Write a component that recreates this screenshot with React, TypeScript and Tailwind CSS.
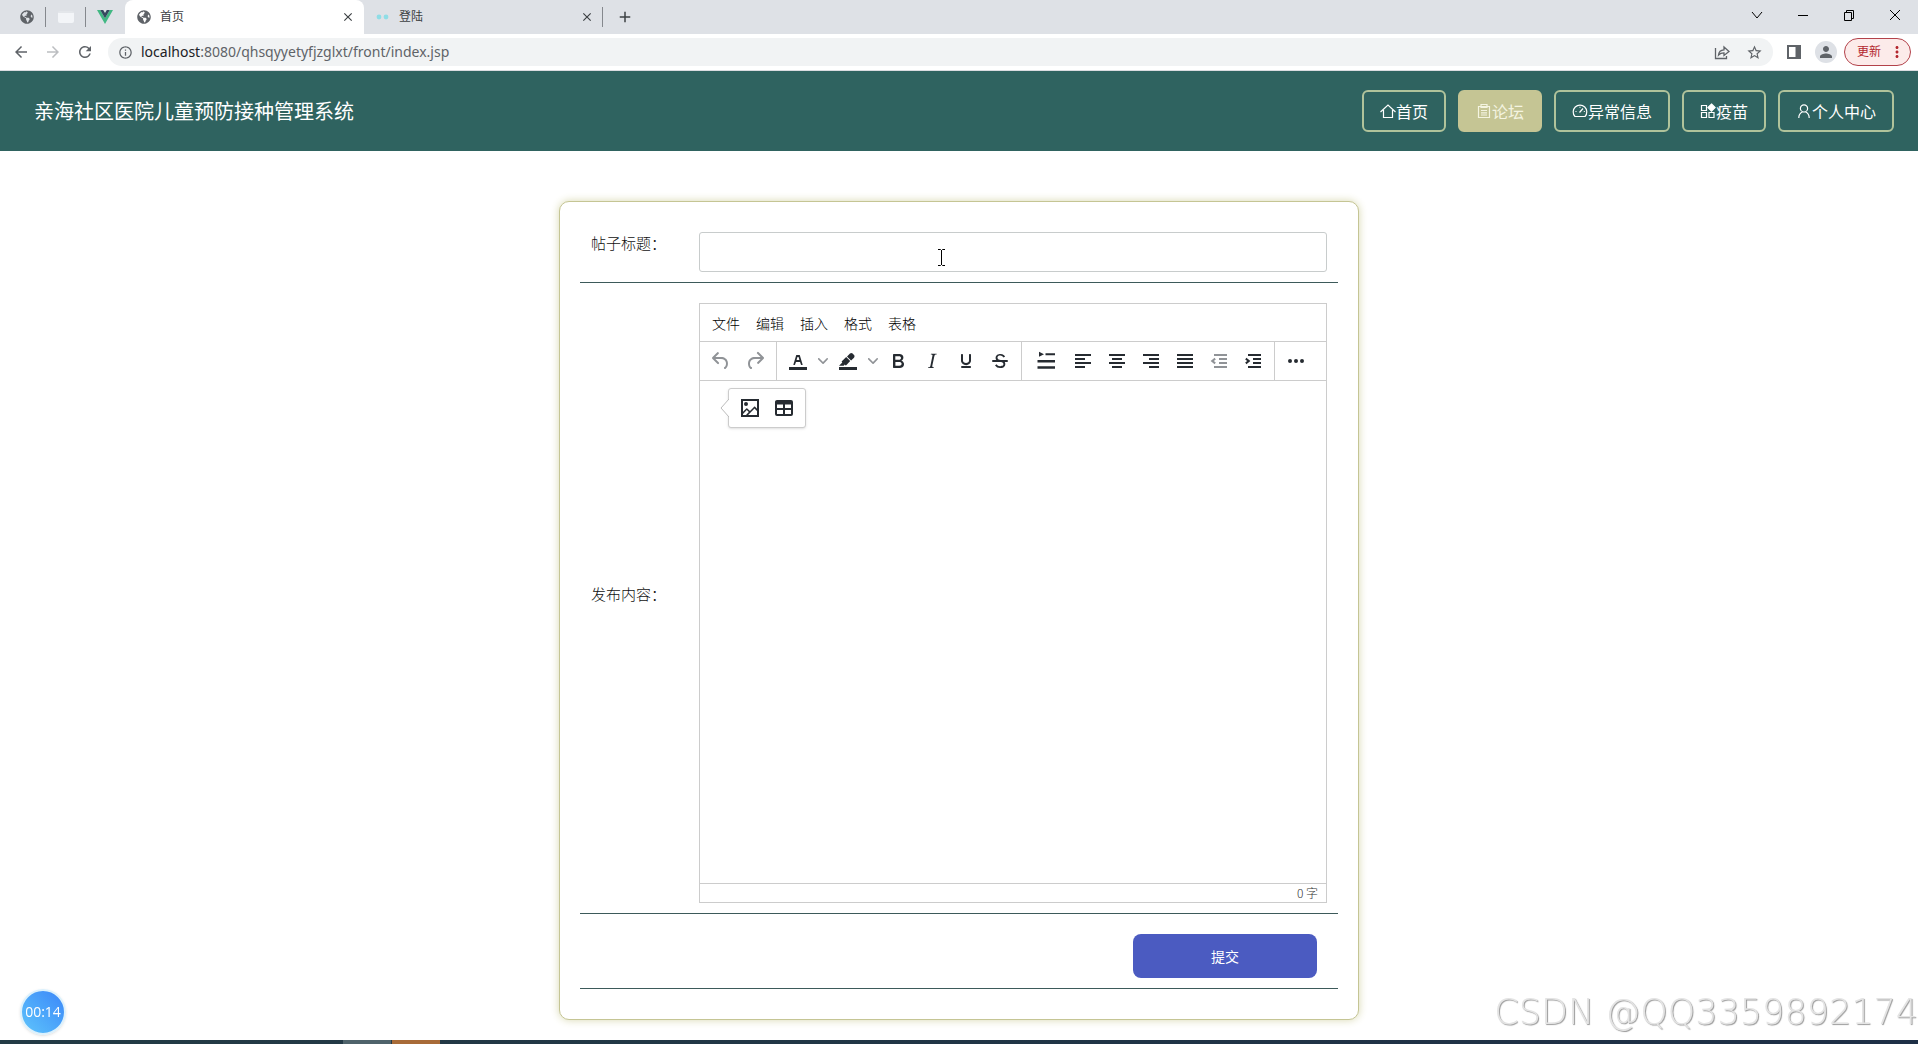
import React from "react";
import clsx from "clsx";
import { FaGlobeAmericas } from "react-icons/fa";
import {
  MdArrowBack,
  MdArrowForward,
  MdRefresh,
  MdInfoOutline,
  MdStarBorder,
  MdPerson,
  MdMoreVert,
  MdAdd,
  MdClose,
} from "react-icons/md";

const navItems = [
  { label: "首页", icon: "home" },
  { label: "论坛", icon: "form", active: true },
  { label: "异常信息", icon: "gauge" },
  { label: "疫苗", icon: "component" },
  { label: "个人中心", icon: "user" },
];

const menus = ["文件", "编辑", "插入", "格式", "表格"];

const navIcons: Record<string, React.ReactNode> = {
  home: <path d="M.5 9 8 2l7.5 7M3.5 7v7.5h9V7" />,
  form: <path d="M2.5 3.5h11v11h-11zM5 1.5h6v3H5zM5 7.5h6M5 9.8h6M5 12h6" />,
  gauge: (
    <path d="M3 13.5a6.8 6.8 0 1 1 10 0zM7.5 9.5l3.5-4M3.5 8.5h1M8 3.8v1M11.8 8.5h1" />
  ),
  component: (
    <>
      <path d="M1.5 2.5h5v5h-5zM1.5 9.5h5v5h-5zM9 9.5h5v5H9z" />
      <path d="m11.5 1 3.6 3.6-3.6 3.6-3.6-3.6z" fill="currentColor" />
    </>
  ),
  user: (
    <path d="M8 9a3.6 3.6 0 1 0 0-7.2A3.6 3.6 0 0 0 8 9zM2.8 15c0-3.4 1.6-5.2 3.7-6.2M13.2 15c0-3.4-1.6-5.2-3.7-6.2" />
  ),
};

const paths = {
  undo: "M6.4 8H12c3.7 0 6.2 2 6.8 5.1.6 2.7-.4 5.6-2.3 6.8a1 1 0 0 1-1-1.8c1.1-.6 1.8-2.7 1.4-4.6-.5-2.1-2.1-3.5-4.9-3.5H6.4l3.3 3.3a1 1 0 1 1-1.4 1.4l-5-5a1 1 0 0 1 0-1.4l5-5a1 1 0 0 1 1.4 1.4L6.4 8z",
  redo: "M17.6 10H12c-2.8 0-4.4 1.4-4.9 3.5-.4 2 .3 4 1.4 4.6a1 1 0 1 1-1 1.8c-2-1.2-2.9-4.1-2.3-6.8.6-3 3-5.1 6.8-5.1h5.6l-3.3-3.3a1 1 0 1 1 1.4-1.4l5 5a1 1 0 0 1 0 1.4l-5 5a1 1 0 0 1-1.4-1.4l3.3-3.3z",
  color:
    "M3 18h18v3H3zM8.7 16h-.8a.5.5 0 0 1-.5-.6l2.7-9c.1-.3.3-.4.5-.4h2.8c.2 0 .4.1.5.4l2.7 9a.5.5 0 0 1-.5.6h-.8a.5.5 0 0 1-.4-.4l-.7-2.2c0-.3-.3-.4-.5-.4h-3.4c-.2 0-.4.1-.5.4l-.7 2.2c0 .3-.2.4-.4.4zm2.6-7.6-.6 2a.5.5 0 0 0 .5.6h1.6a.5.5 0 0 0 .5-.6l-.6-2c0-.3-.3-.4-.5-.4h-.4c-.2 0-.4.1-.5.4z",
  highlight:
    "M3 18h18v3H3zM7.7 16.7H3l3.3-3.3-.7-.8L10.2 8l4 4.1-4 4.2c-.2.2-.6.2-.8 0l-.6-.7-1.1 1.1zm5-7.5L11 7.4l3-2.9a2 2 0 0 1 2.6 0L18 6c.7.7.7 2 0 2.7l-2.9 2.9-1.8-1.8-.5-.6",
  bold: "M7.8 19c-.3 0-.5 0-.6-.2l-.2-.5V5.7c0-.2 0-.4.2-.5l.6-.2h5c1.5 0 2.7.3 3.5 1 .7.6 1.1 1.4 1.1 2.5a3 3 0 0 1-.6 1.9c-.4.6-1 1-1.6 1.2.4.1.9.3 1.3.6s.8.7 1 1.2c.4.4.5 1 .5 1.6 0 1.3-.4 2.3-1.3 3-.8.7-2.1 1-3.8 1H7.8zm5-8.3c.6 0 1.2-.1 1.6-.5.4-.3.6-.7.6-1.3 0-1.1-.8-1.7-2.3-1.7H9.3v3.5h3.4zm.5 6c.7 0 1.3-.1 1.7-.4.4-.4.6-.9.6-1.5s-.2-1-.7-1.4c-.4-.3-1-.4-2-.4H9.4v3.8h4z",
  italic:
    "M16.7 4.7l-.1.9h-.3c-.6 0-1 0-1.4.3-.3.3-.4.6-.5 1.1l-2.1 9.8v.6c0 .5.4.8 1.4.8h.2l-.2.8H8l.2-.8h.2c1.1 0 1.8-.5 2-1.5l2-9.8.1-.5c0-.6-.4-.8-1.4-.8h-.3l.2-.9h5.8z",
  underline:
    "M16 5c.6 0 1 .4 1 1v5.5a4 4 0 0 1-.4 1.8l-1 1.4a5.3 5.3 0 0 1-5.5 1 5 5 0 0 1-1.6-1c-.5-.4-.8-.9-1.1-1.4a4 4 0 0 1-.4-1.8V6c0-.6.4-1 1-1s1 .4 1 1v5.5c0 .3 0 .6.2 1l.6.7a3.3 3.3 0 0 0 2.2.8 3.4 3.4 0 0 0 2.2-.8c.3-.2.4-.5.6-.8l.2-.9V6c0-.6.4-1 1-1zM8 17h8c.6 0 1 .4 1 1s-.4 1-1 1H8a1 1 0 0 1 0-2z",
  strike:
    "M15.6 8.5c-.5-.7-1-1.1-1.3-1.3-.6-.4-1.3-.6-2-.6-2.7 0-2.8 1.7-2.8 2.1 0 1.6 1.8 2 3.2 2.3 4.4.9 4.6 2.8 4.6 3.9 0 1.4-.7 4.1-5 4.1A6.2 6.2 0 0 1 7 16.4l1.5-1.1c.4.6 1.6 2 3.7 2 1.6 0 2.5-.4 3-1.2.4-.8.3-2-.8-2.6-.7-.4-1.6-.7-2.9-1-1-.2-3.9-.8-3.9-3.6C7.6 6 10.3 5 12.4 5c2.9 0 4.2 1.6 4.7 2.4l-1.5 1.1zM5 11h14a1 1 0 0 1 0 2H5a1 1 0 0 1 0-2z",
  indentFirst:
    "M5 2.8 10 5.3 5 7.8zM11.5 4.3H21v2h-9.5zM3.5 11H21v2.500H3.500zM3.500 17.300H21v2.500H3.500z",
  left: "M4 5h16v2H4zM4 9h10v2H4zM4 13h16v2H4zM4 17h10v2H4z",
  center: "M4 5h16v2H4zM7 9h10v2H7zM4 13h16v2H4zM7 17h10v2H7z",
  right: "M4 5h16v2H4zM10 9h10v2H10zM4 13h16v2H4zM10 17h10v2H10z",
  justify: "M4 5h16v2H4zM4 9h16v2H4zM4 13h16v2H4zM4 17h16v2H4z",
  outdent:
    "M7 5h13v2H7zM12 9h8v2h-8zM12 13h8v2h-8zM7 17h13v2H7zM7.6 15.2 3.6 12l4-3.2 1.2 1.6L6.8 12l2 1.6z",
  indent:
    "M7 5h13v2H7zM12 9h8v2h-8zM12 13h8v2h-8zM7 17h13v2H7zM5.4 15.2 9.4 12l-4-3.2-1.2 1.6L6.2 12l-2 1.6z",
  more: "M6 10a2 2 0 1 0 0 4 2 2 0 0 0 0-4zM12 10a2 2 0 1 0 0 4 2 2 0 0 0 0-4zM18 10a2 2 0 1 0 0 4 2 2 0 0 0 0-4z",
  image:
    "M3 3h18v18H3zM5 15.7l3.3-3.2c.3-.3.7-.3 1 0L12 15l4.2-4.2c.2-.3.7-.3.9 0L19 12.7V5H5v10.7zM5 18v1h3l2.8-2.9-2-2L5 18zm14-3-2.5-2.4-6.4 6.5H19v-4zM8 6a2 2 0 1 1 0 4 2 2 0 0 1 0-4z",
  table:
    "M5 4h14a2 2 0 0 1 2 2v12a2 2 0 0 1-2 2H5a2 2 0 0 1-2-2V6c0-1.1.9-2 2-2zM5 14v4h6v-4zM13 14v4h6v-4zM5 8.5V12h6V8.5zM13 8.5V12h6V8.5z",
};

type IconName = keyof typeof paths;

function ToolButton({
  icon,
  label,
  disabled,
  wide,
}: {
  icon: IconName;
  label: string;
  disabled?: boolean;
  wide?: boolean;
}) {
  return (
    <button
      type="button"
      aria-label={label}
      disabled={disabled}
      className={clsx(
        "flex h-[34px] items-center justify-center",
        wide ? "w-10" : "w-[34px]",
        disabled ? "text-[#909397]" : "text-[#262b31]"
      )}
    >
      <svg
        viewBox="0 0 24 24"
        className="size-6"
        fill="currentColor"
        fillRule={icon === "strike" ? "nonzero" : "evenodd"}
      >
        <path d={paths[icon]} />
      </svg>
    </button>
  );
}

function SplitArrow({ label }: { label: string }) {
  return (
    <button
      type="button"
      aria-label={label}
      className="flex h-[34px] w-4 items-center justify-center text-[#909397]"
    >
      <svg viewBox="0 0 10 10" className="size-[10px]" fill="currentColor">
        <path d="M8.7 2.2c.3-.3.8-.3 1 0 .4.4.4.9 0 1.2L5.7 7.8c-.3.3-.9.3-1.2 0L.2 3.4a.8.8 0 0 1 0-1.2c.3-.3.8-.3 1.1 0L5 6l3.7-3.8z" />
      </svg>
    </button>
  );
}

function BrowserBar() {
  return (
    <div className="font-['Noto_Sans','Noto_Sans_CJK_SC',sans-serif]">
      <div className="flex h-[34px] items-stretch bg-[#dee1e6] text-xs text-[#3c4043]">
        <div className="flex w-[125px] items-center justify-between pl-5 pr-3">
          <FaGlobeAmericas className="size-[14px] text-[#5f6368]" />
          <span className="h-5 w-px bg-[#85888d]" />
          <span className="h-3 w-4 rounded-xs border-t-2 border-[#e3e6ea] bg-[#f3f5f8]" />
          <span className="h-5 w-px bg-[#85888d]" />
          <svg viewBox="0 0 16 14" className="h-[14px] w-4">
            <path d="M0 0h3.2L8 8.3 12.8 0H16L8 14z" fill="#41b883" />
            <path d="M3.2 0h3L8 3.1 9.8 0h3L8 8.3z" fill="#35495e" />
          </svg>
        </div>
        <div className="flex w-[239px] items-center rounded-t-lg bg-white pl-3 pr-[9px]">
          <FaGlobeAmericas className="mr-[9px] size-[14px] text-[#5f6368]" />
          <span className="flex-1">首页</span>
          <button type="button" aria-label="关闭首页">
            <MdClose className="size-[14px]" />
          </button>
        </div>
        <div className="flex w-[238px] items-center pl-3 pr-2">
          <svg viewBox="0 0 14 6" className="mr-[9px] h-[6px] w-[14px]" fill="#8fdde6">
            <circle cx="3" cy="3" r="2.4" />
            <circle cx="10" cy="3" r="2.4" />
          </svg>
          <span className="flex-1">登陆</span>
          <button type="button" aria-label="关闭登陆">
            <MdClose className="size-[14px]" />
          </button>
        </div>
        <div className="flex items-center gap-[13px]">
          <span className="h-5 w-px bg-[#85888d]" />
          <button type="button" aria-label="新标签页">
            <MdAdd className="size-[18px]" />
          </button>
        </div>
        <div className="ml-auto flex items-center pb-[5px] text-black">
          {[
            ["搜索标签页", "m1 3 5 6 5-6"],
            ["最小化", "M1 6.5h10"],
            ["还原", "M1.5 3.5h7v8h-7zM3.5 3.5v-2h7v8h-2"],
            ["关闭", "m1 1 10 10M11 1 1 11"],
          ].map(([label, d]) => (
            <button
              key={label}
              type="button"
              aria-label={label}
              className="flex w-[46px] justify-center"
            >
              <svg viewBox="0 0 12 12" className="size-3" fill="none" stroke="currentColor">
                <path d={d} />
              </svg>
            </button>
          ))}
        </div>
      </div>
      <div className="flex h-[37px] items-center border-b border-[#dadce0] bg-white pr-[7px] pl-3 text-[#5f6368]">
        <div className="flex w-24 items-center gap-[14px]">
          <MdArrowBack className="size-[18px]" />
          <MdArrowForward className="size-[18px] text-[#bcbec1]" />
          <MdRefresh className="size-[18px]" />
        </div>
        <div className="flex h-7 min-w-0 flex-1 items-center rounded-full bg-[#f1f3f4] pr-[10px] pl-[10px]">
          <MdInfoOutline className="mr-2 size-[15px]" />
          <span className="flex-1 text-sm">
            <span className="text-[#202124]">localhost</span>
            :8080/qhsqyyetyfjzglxt/front/index.jsp
          </span>
          <svg
            viewBox="0 0 16 16"
            className="mr-4 size-4"
            fill="none"
            stroke="currentColor"
            strokeWidth="1.3"
          >
            <path d="M1.5 4v10.5h11V12M4.5 11c.3-3.5 2-5 5.5-5.2V3l5 4.5-5 4V8.8C7.5 8.8 6 9.3 4.5 11z" />
          </svg>
          <MdStarBorder className="size-[17px]" />
        </div>
        <svg viewBox="0 0 14 14" className="ml-[14px] h-[14px] w-[14px]">
          <path d="M1 1h12v12H1z" fill="none" stroke="currentColor" strokeWidth="2" />
          <path d="M8.5 1H13v12H8.5z" fill="currentColor" />
        </svg>
        <span className="mr-[7px] ml-[14px] flex size-[22px] items-center justify-center rounded-full bg-[#dee1e6]">
          <MdPerson className="size-[18px]" />
        </span>
        <button
          type="button"
          className="flex h-7 w-[67px] items-center justify-between rounded-full border border-[#b3424a] bg-[#fcebea] pr-1 pl-3 text-xs text-[#b3262e]"
        >
          更新
          <MdMoreVert className="size-[18px]" />
        </button>
      </div>
    </div>
  );
}

function SiteHeader() {
  return (
    <header className="flex h-20 items-center justify-between bg-[#2f6360] pr-6 pl-[34px] text-white">
      <h1 className="text-xl">亲海社区医院儿童预防接种管理系统</h1>
      <nav className="flex gap-3">
        {navItems.map((item) => (
          <a
            key={item.label}
            href="#"
            className={clsx(
              "flex h-[42px] items-center rounded-md border-2 px-4 text-base",
              item.active
                ? "border-[#c5c594] bg-[#c5c594] text-[#f4f4e0]"
                : "border-[#b0c39b]"
            )}
          >
            <svg
              viewBox="0 0 16 16"
              className="size-4"
              fill="none"
              stroke="currentColor"
              strokeWidth="1.2"
            >
              {navIcons[item.icon]}
            </svg>
            {item.label}
          </a>
        ))}
      </nav>
    </header>
  );
}

function Editor() {
  return (
    <div className="flex h-[600px] flex-col border border-[#cccccc] text-[#222f3e]">
      <div className="flex h-[38px] items-center border-b border-[#cccccc] px-1">
        {menus.map((menu) => (
          <button key={menu} type="button" className="px-2 text-sm font-light text-black">
            {menu}
          </button>
        ))}
      </div>
      <div className="flex h-[39px] items-stretch border-b border-[#cccccc]">
        <div className="flex items-center border-r border-[#cccccc] px-1">
          <ToolButton icon="undo" label="撤销" disabled />
          <ToolButton icon="redo" label="重做" disabled />
        </div>
        <div className="flex items-center border-r border-[#cccccc] px-1">
          <ToolButton icon="color" label="文字颜色" />
          <SplitArrow label="选择文字颜色" />
          <ToolButton icon="highlight" label="背景颜色" />
          <SplitArrow label="选择背景颜色" />
          <ToolButton icon="bold" label="粗体" />
          <ToolButton icon="italic" label="斜体" />
          <ToolButton icon="underline" label="下划线" />
          <ToolButton icon="strike" label="删除线" />
        </div>
        <div className="flex items-center border-r border-[#cccccc] px-1">
          <ToolButton icon="indentFirst" label="首行缩进" wide />
          <ToolButton icon="left" label="左对齐" />
          <ToolButton icon="center" label="居中对齐" />
          <ToolButton icon="right" label="右对齐" />
          <ToolButton icon="justify" label="两端对齐" />
          <ToolButton icon="outdent" label="减少缩进" disabled />
          <ToolButton icon="indent" label="增加缩进" />
        </div>
        <div className="flex items-center px-1">
          <ToolButton icon="more" label="更多" />
        </div>
      </div>
      <div className="relative flex flex-1">
        <textarea id="content" className="flex-1 resize-none p-4 outline-none" />
        {/* quick insert toolbar */}
        <div className="absolute top-[7px] left-7 flex h-10 items-center rounded-[3px] border border-[#cccccc] bg-white px-1 shadow-sm">
          <svg viewBox="0 0 9 18" className="absolute top-[10px] -left-[9px] h-[18px] w-[9px]">
            <path d="M9 0v18L1 9z" fill="#fff" />
            <path d="M9 0 1 9l8 9" fill="none" stroke="#bbb" />
          </svg>
          <ToolButton icon="image" label="插入图片" />
          <ToolButton icon="table" label="插入表格" />
        </div>
      </div>
      <div className="flex h-[19px] items-center justify-end border-t border-[#cccccc] px-2 text-xs font-light text-[#333333]">
        0 字
      </div>
    </div>
  );
}

function PostForm() {
  return (
    <form className="mx-auto mt-[50px] mb-5 w-full max-w-[800px] rounded-[10px] border border-[#c5c594] bg-white px-5 pt-5 pb-[30px] text-[15px] text-[#111111] shadow-[0_0_8px_#d8d8b0]">
      <div className="flex items-start border-b border-[#3d5a5a] py-[10px] pr-[11px]">
        <label
          htmlFor="title"
          className="w-[119px] shrink-0 pl-[11px] leading-[22px] font-light"
        >
          帖子标题：
        </label>
        <div className="relative flex-1">
          <input
            id="title"
            type="text"
            className="block h-10 w-full rounded-[3px] border border-[#c8cccc] px-3 outline-none"
          />
          {/* text cursor */}
          <svg
            viewBox="0 0 8 17"
            className="absolute top-[17px] left-[238px] h-[17px] w-2"
            fill="none"
            stroke="#000"
          >
            <path d="M1 .5h2.5L4.5 1.5 5.5.5H8M4.5 1v15M1 16.5h2.5l1-1 1 1H8" />
          </svg>
        </div>
      </div>
      <div className="flex items-center border-b border-[#3d5a5a] pt-5 pr-[11px] pb-[10px]">
        <label
          htmlFor="content"
          className="w-[119px] shrink-0 pb-[18px] pl-[11px] leading-[22px] font-light"
        >
          发布内容：
        </label>
        <div className="min-w-0 flex-1">
          <Editor />
        </div>
      </div>
      <div className="flex justify-end border-b border-[#3d5a5a] pt-5 pr-[21px] pb-[10px]">
        <button
          type="submit"
          className="h-11 w-[184px] rounded-lg bg-[#4b5bc1] text-sm text-white"
        >
          提交
        </button>
      </div>
    </form>
  );
}

export default function App() {
  return (
    <div className="flex min-h-screen flex-col bg-white font-['Noto_Sans_CJK_SC',sans-serif]">
      <BrowserBar />
      <SiteHeader />
      <main className="flex-1">
        <PostForm />
      </main>
      <div className="flex h-1 bg-linear-to-r from-[#233b45] to-[#1e2f46] pl-[343px]">
        <span className="mr-px w-12 bg-[#4f636b]" />
        <span className="w-12 bg-[#a86b38]" />
      </div>
      <div className="fixed bottom-[9px] left-5 flex size-[46px] items-center justify-center rounded-full border-2 border-[#dcf1fc] bg-linear-to-tr from-[#5fc4fb] to-[#3d86f8] font-['Open_Sans',sans-serif] text-sm text-white shadow-sm">
        00:14
      </div>
      <div className="fixed right-0 bottom-3 font-['DejaVu_Sans',sans-serif] text-[35px] leading-10 font-extralight text-[#e4e4e4] [text-shadow:1px_1px_1px_#999999]">
        CSDN @QQ3359892174
      </div>
    </div>
  );
}
